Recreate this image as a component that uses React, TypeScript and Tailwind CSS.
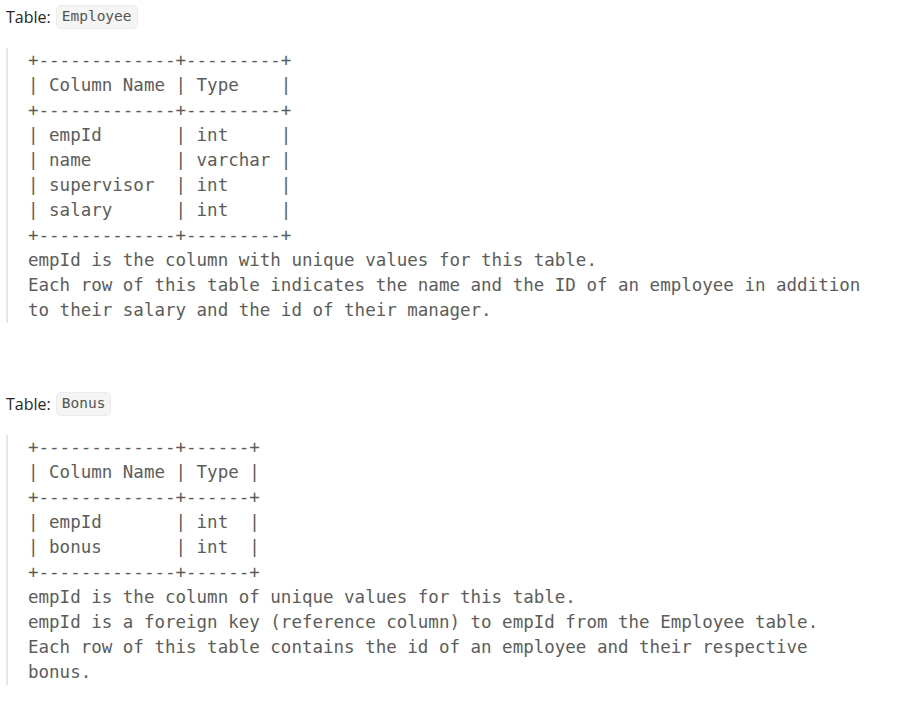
const mono = "font-['DejaVu_Sans_Mono',monospace]";

const employeeSchema = `+-------------+---------+
| Column Name | Type    |
+-------------+---------+
| empId       | int     |
| name        | varchar |
| supervisor  | int     |
| salary      | int     |
+-------------+---------+
empId is the column with unique values for this table.
Each row of this table indicates the name and the ID of an employee in addition
to their salary and the id of their manager.`;

const bonusSchema = `+-------------+------+
| Column Name | Type |
+-------------+------+
| empId       | int  |
| bonus       | int  |
+-------------+------+
empId is the column of unique values for this table.
empId is a foreign key (reference column) to empId from the Employee table.
Each row of this table contains the id of an employee and their respective
bonus.`;

const TableLabel = ({ name }: { name: string }) => (
  <p className="flex items-center gap-[5px] text-[16px] text-[#262626] font-['Open_Sans',sans-serif]">
    Table:
    <code
      className={`${mono} flex h-6 items-center rounded-[5px] border border-[#ebebeb] bg-[#f5f5f5] px-[5px] text-[14.5px] text-[#545454]`}
    >
      {name}
    </code>
  </p>
);

const Schema = ({ text }: { text: string }) => (
  <blockquote className="border-l-2 border-[#e6e6e6] pl-5">
    <pre className={`${mono} whitespace-pre text-[17.5px] leading-[25px] text-[#5c5c5c]`}>
      {text}
    </pre>
  </blockquote>
);

export default function App() {
  return (
    <div className="min-h-screen bg-white px-[6px] pt-[5px]">
      <TableLabel name="Employee" />
      <div className="mt-[19px]">
        <Schema text={employeeSchema} />
      </div>
      <div className="mt-[69px]">
        <TableLabel name="Bonus" />
      </div>
      <div className="mt-[19px]">
        <Schema text={bonusSchema} />
      </div>
    </div>
  );
}
